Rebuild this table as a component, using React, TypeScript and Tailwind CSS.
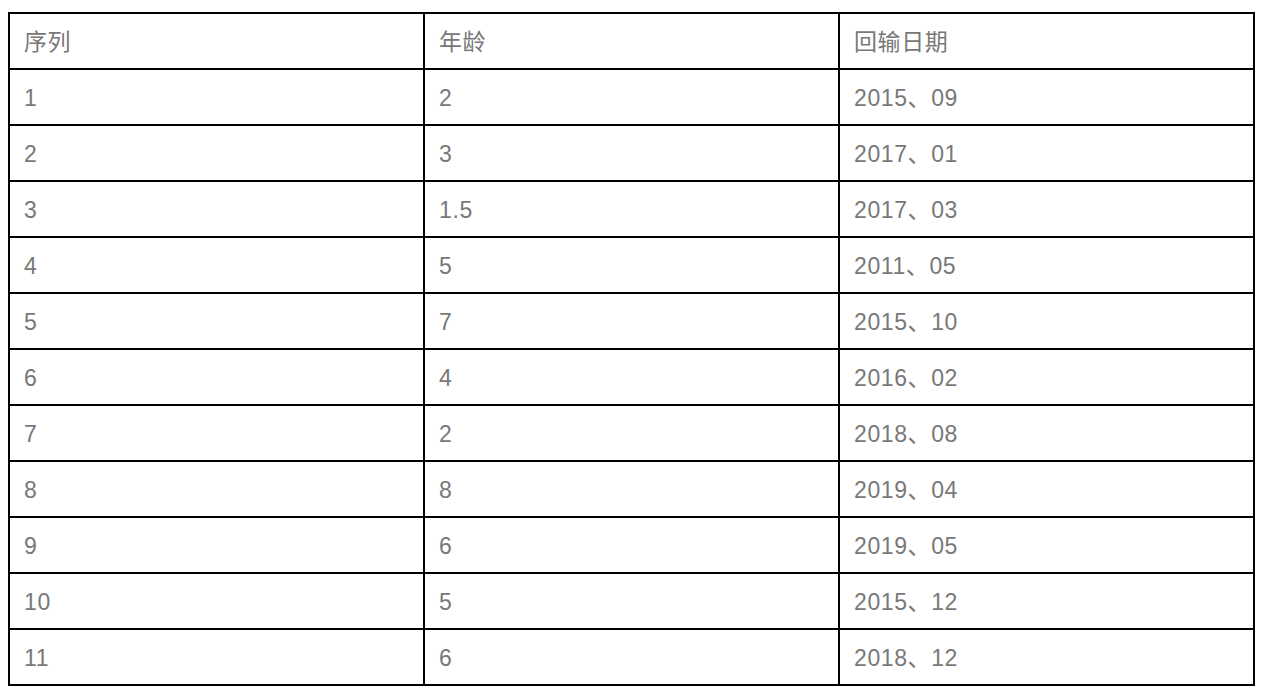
const rows: [string, string, string][] = [
  ['1', '2', '2015、09'],
  ['2', '3', '2017、01'],
  ['3', '1.5', '2017、03'],
  ['4', '5', '2011、05'],
  ['5', '7', '2015、10'],
  ['6', '4', '2016、02'],
  ['7', '2', '2018、08'],
  ['8', '8', '2019、04'],
  ['9', '6', '2019、05'],
  ['10', '5', '2015、12'],
  ['11', '6', '2018、12'],
]

const cell = 'border-2 border-black px-[14px] pt-[2px] h-[56px] align-middle text-left font-normal'

export default function App() {
  return (
    <div
      className="min-h-screen bg-white pt-[12px] pl-[8px]"
      style={{ fontFamily: '"Liberation Sans", "Noto Sans CJK SC", sans-serif' }}
    >
      <table className="w-[1247px] table-fixed border-collapse border-2 border-black text-[23px] tracking-[0.6px] text-[#787878]">
        <thead>
          <tr>
            <th className={cell}>序列</th>
            <th className={cell}>年龄</th>
            <th className={cell}>回输日期</th>
          </tr>
        </thead>
        <tbody>
          {rows.map((r) => (
            <tr key={r[0]}>
              <td className={cell}>{r[0]}</td>
              <td className={cell}>{r[1]}</td>
              <td className={cell}>{r[2]}</td>
            </tr>
          ))}
        </tbody>
      </table>
    </div>
  )
}
